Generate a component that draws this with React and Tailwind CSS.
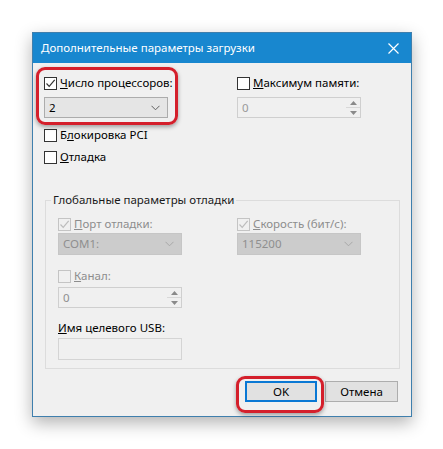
import React from "react";

const font = { fontFamily: '"Segoe UI", "Noto Sans", "Open Sans", sans-serif' };

function Check({ checked, disabled }) {
  return (
    <span
      className={
        "w-[13px] h-[13px] border flex items-center justify-center shrink-0 " +
        (disabled ? "border-[#c4c4c4] bg-[#f0f0f0]" : "border-[#333333] bg-white")
      }
    >
      {checked && (
        <svg width="11" height="11" viewBox="0 0 11 11">
          <path
            d="M1.5 5.5 L4.2 8.3 L9.7 1.8"
            fill="none"
            stroke={disabled ? "#bcbcbc" : "#333333"}
            strokeWidth="1.2"
          />
        </svg>
      )}
    </span>
  );
}

function Row({ checked, disabled, children, noBox }) {
  return (
    <div className={"h-[16px] flex items-center gap-[3px] text-[11.5px] leading-[16px] whitespace-nowrap " + (disabled ? "text-[#8d8d8d]" : "text-black")}>
      {!noBox && <Check checked={checked} disabled={disabled} />}
      <span>{children}</span>
    </div>
  );
}

function Chevron({ color }) {
  return (
    <svg width="9" height="6" viewBox="0 0 9 6">
      <path d="M0.5 0.8 L4.5 4.8 L8.5 0.8" fill="none" stroke={color} strokeWidth="1" />
    </svg>
  );
}

function Spin({ value, color }) {
  return (
    <div className="w-[124px] h-[21px] border border-[#cfcfcf] bg-[#f0f0f0] flex text-[11.5px]">
      <div className={"flex-1 pl-[4px] flex items-center " + color}>{value}</div>
      <div className="w-[14px] flex flex-col">
        <div className="flex-1 flex items-center justify-center border-b border-[#d8d8d8]">
          <svg width="7" height="4" viewBox="0 0 7 4"><path d="M3.5 0 L7 4 L0 4 Z" fill="#8a8a8a" /></svg>
        </div>
        <div className="flex-1 flex items-center justify-center">
          <svg width="7" height="4" viewBox="0 0 7 4"><path d="M0 0 L7 0 L3.5 4 Z" fill="#8a8a8a" /></svg>
        </div>
      </div>
    </div>
  );
}

export default function App() {
  return (
    <div className="w-[443px] h-[449px] bg-white relative pt-[32px] pl-[32px]" style={font}>
      <div className="w-[380px] h-[385px] border border-[#3f7fad] bg-[#f0f0f0] flex flex-col shadow-[0_6px_16px_rgba(0,0,0,0.3)]">
        <div className="h-[30px] bg-[#1887cf] flex items-center justify-between pl-[8px] pr-[12px]">
          <span className="text-white text-[11.5px]">Дополнительные параметры загрузки</span>
          <svg width="11" height="11" viewBox="0 0 11 11">
            <path d="M0.5 0.5 L10.5 10.5 M10.5 0.5 L0.5 10.5" stroke="white" strokeWidth="1.2" />
          </svg>
        </div>
        <div className="flex-1 flex flex-col pl-[11px] pr-[13px] pt-[12px]">
          <div className="flex">
            <div className="w-[193px] flex flex-col">
              <Row checked>
                <u>Ч</u>исло процессоров:
              </Row>
              <div className="mt-[6px] w-[124px] h-[21px] border border-[#acacac] bg-[#e5e5e5] flex items-center justify-between pl-[4px] pr-[7px] text-[11.5px] text-black">
                <span>2</span>
                <Chevron color="#606060" />
              </div>
              <div className="mt-[9px]">
                <Row>
                  Б<u>л</u>окировка PCI
                </Row>
              </div>
              <div className="mt-[6px]">
                <Row>
                  <u>О</u>тладка
                </Row>
              </div>
            </div>
            <div className="flex flex-col">
              <Row>
                <u>М</u>аксимум памяти:
              </Row>
              <div className="mt-[6px]">
                <Spin value="0" color="text-[#9a9a9a]" />
              </div>
            </div>
          </div>

          <fieldset className="mt-[27px] ml-[1px] w-[355px] border border-[#dcdcdc] pl-[12px] pb-[8px]">
            <legend className="ml-[-7px] px-[2px] text-[11.5px] leading-[16px] text-[#1a1a1a]">
              Глобальные параметры отладки
            </legend>
            <div className="pt-[8px] flex">
              <div className="w-[179px] flex flex-col">
                <Row checked disabled>
                  <u>П</u>орт отладки:
                </Row>
                <div className="mt-[1px] w-[124px] h-[22px] border border-[#c6c6c6] bg-[#cccccc] flex items-center justify-between pl-[4px] pr-[7px] text-[11.5px] text-[#8f8f8f]">
                  <span>COM1:</span>
                  <Chevron color="#a8a8a8" />
                </div>
                <div className="mt-[13px]">
                  <Row disabled>
                    <u>К</u>анал:
                  </Row>
                </div>
                <div className="mt-[3px]">
                  <Spin value="0" color="text-[#8f8f8f]" />
                </div>
                <div className="mt-[12px]">
                  <Row noBox>
                    <u>И</u>мя целевого USB:
                  </Row>
                </div>
                <div className="mt-[2px] w-[124px] h-[22px] border border-[#d4d4d4] bg-[#f0f0f0]" />
              </div>
              <div className="flex flex-col">
                <Row checked disabled>
                  <u>С</u>корость (бит/с):
                </Row>
                <div className="mt-[1px] w-[124px] h-[22px] border border-[#c6c6c6] bg-[#cccccc] flex items-center justify-between pl-[4px] pr-[7px] text-[11.5px] text-[#8f8f8f]">
                  <span>115200</span>
                  <Chevron color="#a8a8a8" />
                </div>
              </div>
            </div>
          </fieldset>

          <div className="mt-[12px] flex justify-end gap-[8px]">
            <div className="w-[72px] h-[21px] border-2 border-[#0a78d4] bg-[#e1e1e1] flex items-center justify-center text-[11.5px] text-black">
              OK
            </div>
            <div className="w-[73px] h-[21px] border border-[#adadad] bg-[#e1e1e1] flex items-center justify-center text-[11.5px] text-black">
              Отмена
            </div>
          </div>
        </div>
      </div>

      <div className="absolute left-[36px] top-[67px] w-[142px] h-[58px] border-[3px] border-[#d41f2b] rounded-[9px] shadow-[0_2px_4px_rgba(0,0,0,0.35)]" />
      <div className="absolute left-[236px] top-[376px] w-[88px] h-[37px] border-[3px] border-[#d41f2b] rounded-[9px] shadow-[0_2px_4px_rgba(0,0,0,0.35)]" />
    </div>
  );
}
